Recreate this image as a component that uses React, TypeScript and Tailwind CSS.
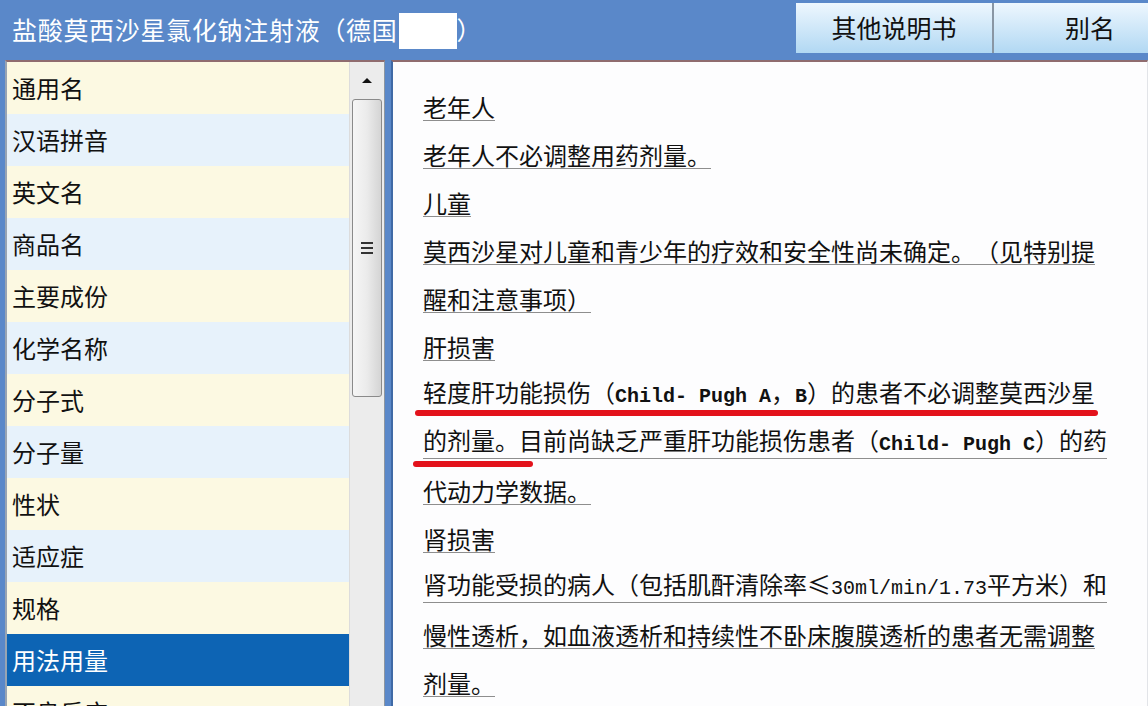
import React from "react";

type Seg = string | { m: string; b?: boolean } | { w: string };

// left menu entries
const items = [
  "通用名",
  "汉语拼音",
  "英文名",
  "商品名",
  "主要成份",
  "化学名称",
  "分子式",
  "分子量",
  "性状",
  "适应症",
  "规格",
  "用法用量",
  "不良反应",
];
const selected = 11;

// text lines of the right panel
const lines: Seg[][] = [
  ["老年人"],
  ["老年人不必调整用药剂量。"],
  ["儿童"],
  ["莫西沙星对儿童和青少年的疗效和安全性尚未确定。（见特别提"],
  ["醒和注意事项）"],
  ["肝损害"],
  ["轻度肝功能损伤（", { m: "Child- Pugh A", b: true }, "，", { m: "B", b: true }, "）的患者不必调整莫西沙星"],
  ["的剂量。目前尚缺乏严重肝功能损伤患者（", { m: "Child- Pugh C", b: true }, "）的药"],
  ["代动力学数据。"],
  ["肾损害"],
  ["肾功能受损的病人（包括肌酐清除率", { w: "≤" }, { m: "30ml/min/1.73" }, "平方米）和"],
  ["慢性透析，如血液透析和持续性不卧床腹膜透析的患者无需调整"],
  ["剂量。"],
];

function Line({ segs }: { segs: Seg[] }) {
  return (
    <span className="inline-block border-b border-[#8e8e8e] text-[24px] leading-[26px] whitespace-nowrap">
      {segs.map((s, i) => {
        if (typeof s === "string") return <span key={i}>{s}</span>;
        if ("w" in s)
          return (
            <span key={i} className="inline-block w-[24px] text-center">
              {s.w}
            </span>
          );
        return (
          <span
            key={i}
            className={
              s.b
                ? "font-['Liberation_Mono',monospace] text-[20px] font-bold"
                : "font-['Liberation_Mono',monospace] text-[20px]"
            }
          >
            {s.m}
          </span>
        );
      })}
    </span>
  );
}

export default function App() {
  return (
    <div className="w-[1148px] h-[706px] overflow-hidden bg-[#5a88c9] flex flex-col font-['Noto_Sans_CJK_SC',sans-serif] text-[#111] [text-spacing-trim:space-all]">
      {/* title bar */}
      <div className="h-[60px] flex shrink-0">
        <div className="flex-1 flex items-center pl-[12px] text-white text-[25px] tracking-[0.7px] whitespace-nowrap">
          <span>盐酸莫西沙星氯化钠注射液（德国</span>
          <div className="ml-[1px] w-[58px] h-[36px] bg-white mt-[2px]" />
          <span>）</span>
        </div>
        <div className="w-[352px] shrink-0 mt-[3px] h-[50px] flex overflow-hidden">
          <button className="w-[196px] shrink-0 h-full bg-gradient-to-b from-[#eef7fe] to-[#b1d8f3] text-[25px] text-[#111]">
            其他说明书
          </button>
          <button className="w-[194px] shrink-0 h-full border-l-2 border-[#8996a4] bg-gradient-to-b from-[#eef7fe] to-[#b1d8f3] text-[25px] text-[#111]">
            别名
          </button>
        </div>
      </div>

      {/* body */}
      <div className="flex-1 flex min-h-0">
        {/* left list */}
        <div className="ml-[5px] w-[380px] shrink-0 flex border-t-2 border-l-2 border-t-[#8f6c6f] border-l-[#98a4b3] border-r border-r-[#8d96a0] bg-white">
          <div className="w-[342px] flex flex-col">
            {items.map((t, i) => (
              <div
                key={t}
                className={
                  i === selected
                    ? "h-[52px] shrink-0 flex items-center pl-[5px] text-[24px] bg-[#0d64b4] text-white"
                    : i % 2 === 0
                    ? "h-[52px] shrink-0 flex items-center pl-[5px] text-[24px] bg-[#fcf9e2]"
                    : "h-[52px] shrink-0 flex items-center pl-[5px] text-[24px] bg-[#e7f2fb]"
                }
              >
                {t}
              </div>
            ))}
          </div>
          {/* scrollbar */}
          <div className="w-[35px] bg-[#ececec] border-l border-[#dcdcdc] flex flex-col items-center">
            <div className="h-[37px] w-full flex items-center justify-center">
              <div className="w-0 h-0 border-x-[5px] border-x-transparent border-b-[5px] border-b-[#111]" />
            </div>
            <div className="w-[30px] h-[298px] rounded-[3px] border border-[#8a8a8a] bg-gradient-to-r from-[#f6f6f6] via-[#ebebeb] to-[#d4d4d4] flex flex-col items-center justify-center gap-[3px]">
              <div className="w-[12px] h-[2px] bg-[#333]" />
              <div className="w-[12px] h-[2px] bg-[#333]" />
              <div className="w-[12px] h-[2px] bg-[#333]" />
            </div>
          </div>
        </div>

        {/* right content */}
        <div className="ml-[6px] flex-1 border-t-2 border-t-[#8f6c6f] border-l-2 border-l-[#3f6aa6] border-r border-r-[#e2e4e8] bg-[#fdfdfe] pl-[30px] pt-[21px] flex flex-col">
          {lines.map((segs, i) => (
            <div key={i} className="relative h-[48px] shrink-0 flex items-center">
              <Line segs={segs} />
              {i === 6 && (
                <div className="absolute left-[-8px] top-[39px] w-[683px] h-[6px] rounded-full bg-[#e3121b]" />
              )}
              {i === 7 && (
                <div className="absolute left-[-10px] top-[42px] w-[120px] h-[6px] rounded-full bg-[#e3121b]" />
              )}
            </div>
          ))}
        </div>
      </div>
    </div>
  );
}
